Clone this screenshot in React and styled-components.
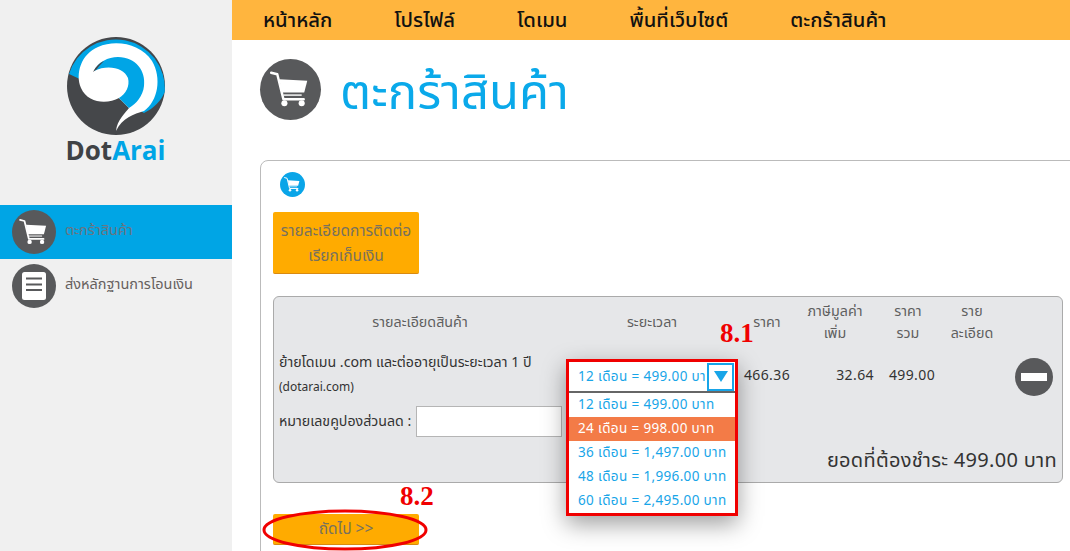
import styled, { createGlobalStyle } from "styled-components";

const FONT = `"Noto Sans Thai", "Noto Sans", "Open Sans", "DejaVu Sans", sans-serif`;

const GlobalStyle = createGlobalStyle`
  html, body {
    margin: 0;
    padding: 0;
    height: 100%;
    overflow: hidden;
    background: #fff;
  }
  * {
    box-sizing: border-box;
  }
  body {
    font-family: ${FONT};
  }
`;

const Page = styled.div`
  display: flex;
  width: 1070px;
  height: 551px;
  overflow: hidden;
`;

const Sidebar = styled.aside`
  width: 232px;
  flex: none;
  background: #f0f0f0;
  padding-top: 36px;
`;

const LogoWrap = styled.div`
  height: 169px;
  display: flex;
  flex-direction: column;
  align-items: center;
  padding-right: 1px;
`;

const LogoName = styled.div`
  font-family: "Open Sans", sans-serif;
  font-weight: 700;
  font-size: 26px;
  line-height: 26px;
  margin-top: 1px;
  color: #3f4245;
  span {
    color: #00a5e6;
  }
`;

const SideItem = styled.a`
  height: 54px;
  display: flex;
  align-items: center;
  gap: 9px;
  padding-left: 12px;
  font-size: 14.5px;
  color: ${(props) => (props.$active ? "#6c7480" : "#66605e")};
  background: ${(props) => (props.$active ? "#00a5e5" : "transparent")};
`;

const SideLabel = styled.span`
  margin-top: -2px;
`;

const IconCircle = styled.div`
  width: ${(props) => props.$size}px;
  height: ${(props) => props.$size}px;
  flex: none;
  border-radius: 50%;
  background: ${(props) => props.$bg || "#58595b"};
  display: flex;
  align-items: center;
  justify-content: center;
  svg {
    display: block;
    width: 100%;
    height: 100%;
  }
`;

const Main = styled.main`
  flex: 1;
  min-width: 0;
`;

const TopNav = styled.nav`
  height: 40px;
  background: #ffb53e;
  display: flex;
  align-items: center;
  gap: 62px;
  padding-left: 31px;
  font-size: 20.3px;
  font-weight: 500;
  color: #111;
`;

const PageHeader = styled.header`
  height: 120px;
  padding: 19px 0 0 28px;
  display: flex;
  align-items: flex-start;
  gap: 19px;
`;

const PageTitle = styled.h1`
  margin: 0;
  font-size: 49px;
  font-weight: 400;
  line-height: 70px;
  color: #0aa9ea;
`;

const Card = styled.section`
  margin-left: 28px;
  width: 830px;
  height: 420px;
  border: 1px solid #bbb;
  border-radius: 8px;
  padding: 11px 12px 0;
  position: relative;
`;

const CardIcon = styled.div`
  margin-left: 7px;
  height: 40px;
`;

const OrangeButton = styled.button`
  all: unset;
  display: block;
  box-sizing: border-box;
  width: 146px;
  padding: ${(props) => props.$pad || "0"};
  height: ${(props) => props.$height}px;
  background: #ffab00;
  border-bottom: 1px solid #d98a10;
  border-radius: 2px;
  text-align: center;
  font-size: 15.5px;
  line-height: 25px;
  color: #77715f;
`;

const Panel = styled.div`
  margin-top: 22px;
  width: 790px;
  height: 187px;
  background: #e6e7e9;
  border: 1px solid #aaa;
  border-radius: 6px;
  position: relative;
`;

const Row = styled.div`
  display: grid;
  grid-template-columns: 292px 172px 58px 78px 68px 60px 59px;
`;

const HeadCell = styled.div`
  height: 52px;
  display: flex;
  align-items: center;
  justify-content: center;
  text-align: center;
  font-size: 14.3px;
  line-height: 22px;
  color: #5f5f5f;
`;

const Product = styled.div`
  padding: 2px 0 0 5px;
  height: 100px;
  font-size: 14.2px;
  color: #333;
`;

const ProductLine = styled.div`
  height: 24px;
  line-height: 24px;
  font-size: ${(props) => props.$size || 14.2}px;
  white-space: nowrap;
`;

const Coupon = styled.label`
  display: flex;
  align-items: center;
  gap: 5px;
  margin-top: 7px;
  white-space: nowrap;
`;

const CouponInput = styled.input`
  width: 146px;
  height: 31px;
  border: 1px solid #b5b5b5;
  background: #fff;
  padding: 0 6px;
`;

const Amount = styled.div`
  padding-top: 17px;
  font-size: 14px;
  line-height: 20px;
  letter-spacing: 0.4px;
  color: #333;
  text-align: ${(props) => props.$align || "center"};
  padding-left: ${(props) => props.$left || 0}px;
`;

const RemoveCell = styled.div`
  padding: 9px 0 0 13px;
`;

const SelectCell = styled.div`
  position: relative;
`;

const Dropdown = styled.div`
  position: absolute;
  left: 0;
  top: 10px;
  width: 172px;
  height: 157px;
  border: 3px solid #f00000;
  background: #fff;
  box-shadow: 0 8px 22px rgba(0, 0, 0, 0.38);
  font-size: 13.5px;
  letter-spacing: 0.35px;
  color: #18a5e8;
  z-index: 2;
`;

const Chosen = styled.div`
  height: 31px;
  display: flex;
  align-items: center;
  justify-content: space-between;
  border-bottom: 2px solid #666;
  padding-left: 9px;
  overflow: hidden;
  white-space: nowrap;
`;

const ChosenText = styled.span`
  flex: 1;
  min-width: 0;
  overflow: hidden;
  margin-right: 2px;
`;

const ArrowBox = styled.div`
  width: 27px;
  height: 28px;
  flex: none;
  margin-right: 1px;
  border: 2px solid #18a5e8;
  background: #fff;
  display: flex;
  align-items: center;
  justify-content: center;
`;

const Arrow = styled.div`
  width: 0;
  height: 0;
  border-left: 7px solid transparent;
  border-right: 7px solid transparent;
  border-top: 11px solid #18a5e8;
`;

const Option = styled.div`
  height: 24px;
  line-height: 24px;
  padding-left: 9px;
  white-space: nowrap;
  background: ${(props) => (props.$selected ? "#f37b47" : "transparent")};
  color: ${(props) => (props.$selected ? "#fff" : "inherit")};
`;

const Total = styled.div`
  position: absolute;
  right: 5px;
  bottom: 6px;
  font-size: 20px;
  letter-spacing: 0.3px;
  line-height: 30px;
  color: #333;
`;

const NextWrap = styled.div`
  position: relative;
  margin-top: 31px;
  width: 146px;
`;

const Note = styled.div`
  position: absolute;
  left: ${(props) => props.$left}px;
  top: ${(props) => props.$top}px;
  font-family: "Liberation Serif", serif;
  font-weight: 700;
  font-size: 27px;
  line-height: 28px;
  color: #f00000;
  z-index: 3;
`;

const Ring = styled.svg`
  position: absolute;
  left: -11px;
  top: -5px;
  width: 166px;
  height: 42px;
  overflow: visible;
`;

const CartIcon = () => (
  <svg viewBox="0 0 60 60">
    <path d="M11 13.5 L17 15 L23 39.5 H43" fill="none" stroke="#fff" strokeWidth="2.4" strokeLinecap="round" strokeLinejoin="round" />
    <path d="M19 20 L46.5 21.5 L43.5 33 L21.6 33 Z" fill="#fff" />
    <path d="M23 35.5 H41" stroke="#fff" strokeWidth="1.4" />
    <circle cx="24" cy="43.5" r="3" fill="#fff" />
    <circle cx="41" cy="43.5" r="3" fill="#fff" />
  </svg>
);

const DocIcon = () => (
  <svg viewBox="0 0 44 44">
    <rect x="10" y="8" width="24" height="28" rx="2.5" fill="#fff" />
    <path d="M14 14.5 H30 M14 20.5 H30 M14 26 H30" stroke="#58595b" strokeWidth="1.8" />
  </svg>
);

const MinusIcon = () => (
  <svg viewBox="0 0 38 38">
    <rect x="6" y="15" width="26" height="8" fill="#fff" />
  </svg>
);

const LogoMark = () => (
  <svg width="100" height="100" viewBox="0 0 100 100">
    <circle cx="50" cy="50" r="49" fill="#45474a" />
    <path d="M3 38 A49 49 0 0 1 98.7 56 C95 65 88 72 78 77 L50 60 Z" fill="#00a5e6" />
    <path
      d="M50 95 C51 84 60 76 63 72 L53 62 C42 68 22 68 15 52 C9 38 15 18 32 11 C50 3 75 8 86 25 C96 42 92 65 78 75 C68 78 56 82 50 95 Z"
      fill="#fff"
    />
    <path
      d="M28 35 C32 26 42 21 52 21 C70 21 80 35 78 50 C77 60 70 68 63 72 L53 62 C60 58 64 50 62 42 C58 32 42 28 28 35 Z"
      fill="#00a5e6"
    />
    <path d="M27 36 C30 30 34 27 38 25 C34 29 32 31 31 33 Z" fill="#45474a" />
  </svg>
);

const navItems = ["หน้าหลัก", "โปรไฟล์", "โดเมน", "พื้นที่เว็บไซต์", "ตะกร้าสินค้า"];
const terms = [
  "12 เดือน = 499.00 บาท",
  "24 เดือน = 998.00 บาท",
  "36 เดือน = 1,497.00 บาท",
  "48 เดือน = 1,996.00 บาท",
  "60 เดือน = 2,495.00 บาท",
];

export default function App() {
  return (
    <Page>
      <GlobalStyle />
      <Sidebar>
        <LogoWrap>
          <LogoMark />
          <LogoName>
            Dot<span>Arai</span>
          </LogoName>
        </LogoWrap>
        <SideItem $active>
          <IconCircle $size={44}>
            <CartIcon />
          </IconCircle>
          <SideLabel>ตะกร้าสินค้า</SideLabel>
        </SideItem>
        <SideItem>
          <IconCircle $size={44}>
            <DocIcon />
          </IconCircle>
          <SideLabel>ส่งหลักฐานการโอนเงิน</SideLabel>
        </SideItem>
      </Sidebar>
      <Main>
        <TopNav>
          {navItems.map((item) => (
            <span key={item}>{item}</span>
          ))}
        </TopNav>
        <PageHeader>
          <IconCircle $size={61}>
            <CartIcon />
          </IconCircle>
          <PageTitle>ตะกร้าสินค้า</PageTitle>
        </PageHeader>
        <Card>
          <CardIcon>
            <IconCircle $size={25} $bg="#0aa5e8">
              <CartIcon />
            </IconCircle>
          </CardIcon>
          <OrangeButton $height={62} $pad="3px 0 0">
            รายละเอียดการติดต่อ
            <br />
            เรียกเก็บเงิน
          </OrangeButton>
          <Panel>
            <Row>
              <HeadCell>รายละเอียดสินค้า</HeadCell>
              <HeadCell>ระยะเวลา</HeadCell>
              <HeadCell>ราคา</HeadCell>
              <HeadCell>
                ภาษีมูลค่า
                <br />
                เพิ่ม
              </HeadCell>
              <HeadCell>
                ราคา
                <br />
                รวม
              </HeadCell>
              <HeadCell>
                ราย
                <br />
                ละเอียด
              </HeadCell>
              <span />
            </Row>
            <Row>
              <Product>
                <ProductLine>ย้ายโดเมน .com และต่ออายุเป็นระยะเวลา 1 ปี</ProductLine>
                <ProductLine $size={12}>(dotarai.com)</ProductLine>
                <Coupon>
                  หมายเลขคูปองส่วนลด :
                  <CouponInput />
                </Coupon>
              </Product>
              <SelectCell>
                <Dropdown>
                  <Chosen>
                    <ChosenText>{terms[0]}</ChosenText>
                    <ArrowBox>
                      <Arrow />
                    </ArrowBox>
                  </Chosen>
                  {terms.map((term, i) => (
                    <Option key={term} $selected={i === 1}>
                      {term}
                    </Option>
                  ))}
                </Dropdown>
              </SelectCell>
              <Amount>466.36</Amount>
              <Amount $align="right">32.64</Amount>
              <Amount $left={8}>499.00</Amount>
              <span />
              <RemoveCell>
                <IconCircle $size={38}>
                  <MinusIcon />
                </IconCircle>
              </RemoveCell>
            </Row>
            <Total>ยอดที่ต้องชำระ 499.00 บาท</Total>
          </Panel>
          <NextWrap>
            <OrangeButton $height={31}>ถัดไป &gt;&gt;</OrangeButton>
            <Ring viewBox="0 0 166 42">
              <ellipse cx="83" cy="21" rx="81" ry="19" fill="none" stroke="#f00000" strokeWidth="3" />
            </Ring>
          </NextWrap>
          <Note $left={459} $top={158}>8.1</Note>
          <Note $left={139} $top={321}>8.2</Note>
        </Card>
      </Main>
    </Page>
  );
}
